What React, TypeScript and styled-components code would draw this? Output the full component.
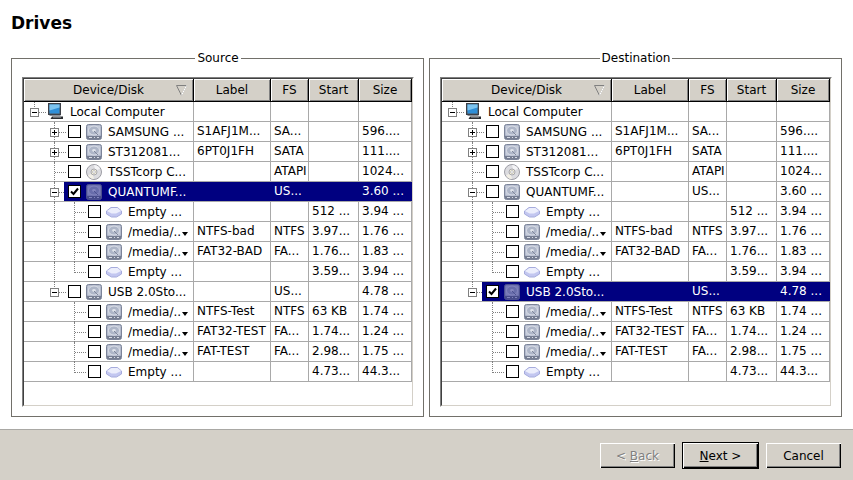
import styled, { createGlobalStyle } from "styled-components";

const GlobalStyle = createGlobalStyle`
  html, body {
    margin: 0;
    padding: 0;
    background: #fff;
  }
  body {
    font-family: "DejaVu Sans", sans-serif;
    font-size: 12px;
    color: #000;
  }
`;

type Kind = "computer" | "disk" | "cd" | "empty";

type DriveRow = {
  id: string;
  level: 0 | 1 | 2;
  kind: Kind;
  name: string;
  label?: string;
  fs?: string;
  start?: string;
  size?: string;
  expander?: "+" | "-";
  mounted?: boolean;
  // last sibling at this level, the guide stops half way
  last?: boolean;
  // the level 1 guide still runs through this row
  parentContinues?: boolean;
};

const rows: DriveRow[] = [
  { id: "root", level: 0, kind: "computer", name: "Local Computer", expander: "-" },
  { id: "samsung", level: 1, kind: "disk", name: "SAMSUNG ...", label: "S1AFJ1M...", fs: "SA...", size: "596....", expander: "+" },
  { id: "st", level: 1, kind: "disk", name: "ST312081...", label: "6PT0J1FH", fs: "SATA", size: "111....", expander: "+" },
  { id: "tsst", level: 1, kind: "cd", name: "TSSTcorp C...", fs: "ATAPI", size: "1024..." },
  { id: "quantum", level: 1, kind: "disk", name: "QUANTUMF...", fs: "US...", size: "3.60 ...", expander: "-" },
  { id: "q1", level: 2, kind: "empty", name: "Empty ...", start: "512 ...", size: "3.94 ...", parentContinues: true },
  { id: "q2", level: 2, kind: "disk", name: "/media/..", mounted: true, label: "NTFS-bad", fs: "NTFS", start: "3.97...", size: "1.76 ...", parentContinues: true },
  { id: "q3", level: 2, kind: "disk", name: "/media/..", mounted: true, label: "FAT32-BAD", fs: "FA...", start: "1.76...", size: "1.83 ...", parentContinues: true },
  { id: "q4", level: 2, kind: "empty", name: "Empty ...", start: "3.59...", size: "3.94 ...", parentContinues: true, last: true },
  { id: "usb", level: 1, kind: "disk", name: "USB 2.0Sto...", fs: "US...", size: "4.78 ...", expander: "-", last: true },
  { id: "u1", level: 2, kind: "disk", name: "/media/..", mounted: true, label: "NTFS-Test", fs: "NTFS", start: "63 KB", size: "1.74 ..." },
  { id: "u2", level: 2, kind: "disk", name: "/media/..", mounted: true, label: "FAT32-TEST", fs: "FA...", start: "1.74...", size: "1.24 ..." },
  { id: "u3", level: 2, kind: "disk", name: "/media/..", mounted: true, label: "FAT-TEST", fs: "FA...", start: "2.98...", size: "1.75 ..." },
  { id: "u4", level: 2, kind: "empty", name: "Empty ...", start: "4.73...", size: "44.3...", last: true },
];

const COLUMNS = "170px 77px 38px 50px 53px";

const Page = styled.div`
  width: 853px;
  height: 480px;
  display: flex;
  flex-direction: column;
  overflow: hidden;
`;

const Main = styled.main`
  height: 430px;
  box-sizing: border-box;
  padding: 0 0 0 11px;
  border-bottom: 1px solid #a9a8a4;
  background: #fff;
`;

const Title = styled.h1`
  margin: 0;
  height: 51px;
  padding-top: 13px;
  box-sizing: border-box;
  font-size: 17px;
  line-height: 21px;
  font-weight: bold;
`;

const Panels = styled.div`
  display: flex;
  gap: 5px;
`;

const Group = styled.fieldset`
  box-sizing: border-box;
  width: 413px;
  height: 366px;
  margin: 0;
  padding: 12px 9px 9px 10px;
  min-width: 0;
  border: 1px solid #72706a;
`;

const GroupTitle = styled.legend`
  margin: 0 auto;
  padding: 0 2px;
  font-size: 12px;
  line-height: 14px;
`;

const TreeFrame = styled.div`
  box-sizing: border-box;
  width: 392px;
  height: 330px;
  border: 1px solid;
  border-color: #808080 #fff #fff #808080;
`;

const TreeInner = styled.div`
  box-sizing: border-box;
  height: 100%;
  border: 1px solid;
  border-color: #404040 #d4d0c8 #d4d0c8 #404040;
  background: #fff;
`;

const HeaderRow = styled.div`
  display: grid;
  grid-template-columns: ${COLUMNS};
  height: 23px;
`;

const HeaderCell = styled.div`
  position: relative;
  display: flex;
  align-items: center;
  justify-content: center;
  box-sizing: border-box;
  background: #d4d0c8;
  border-right: 1px solid #000;
  border-bottom: 1px solid #000;
  box-shadow: inset 1px 1px 0 #fff, inset -1px -1px 0 #808080;
`;

const SortMark = styled.svg`
  position: absolute;
  right: 6px;
  top: 6px;
`;

const Row = styled.div<{ $selected: boolean }>`
  display: grid;
  grid-template-columns: ${COLUMNS};
  height: 20px;
  color: ${(p) => (p.$selected ? "#fff" : "#000")};
`;

const Cell = styled.div<{ $selected: boolean }>`
  box-sizing: border-box;
  padding-left: 3px;
  line-height: 18px;
  white-space: nowrap;
  overflow: hidden;
  background: ${(p) => (p.$selected ? "#000080" : "transparent")};
  border-right: 1px solid ${(p) => (p.$selected ? "#000080" : "#a9a9a9")};
  box-shadow: 0 1px 0 #a9a9a9;
  height: 19px;
`;

const TreeCell = styled.div<{ $selected: boolean }>`
  display: flex;
  box-sizing: border-box;
  height: 19px;
  box-shadow: 0 1px 0 #a9a9a9;
  border-right: 1px solid ${(p) => (p.$selected ? "#000080" : "#a9a9a9")};
`;

const Guide = styled.div<{ $line: "none" | "full" | "half"; $branch: boolean }>`
  position: relative;
  flex: none;
  width: 20px;
  height: 20px;

  &::before {
    content: "";
    display: ${(p) => (p.$line === "none" ? "none" : "block")};
    position: absolute;
    left: 10px;
    top: 0;
    height: ${(p) => (p.$line === "full" ? "20px" : "11px")};
    border-left: 1px dotted #808080;
  }
  &::after {
    content: "";
    display: ${(p) => (p.$branch ? "block" : "none")};
    position: absolute;
    left: 11px;
    top: 10px;
    width: 11px;
    border-top: 1px dotted #808080;
  }
`;

const Expander = styled.span`
  position: absolute;
  z-index: 1;
  left: 6px;
  top: 6px;
  box-sizing: border-box;
  width: 9px;
  height: 9px;
  border: 1px solid #808080;
  background: #fff;

  &::before {
    content: "";
    position: absolute;
    left: 1px;
    top: 3px;
    width: 5px;
    height: 1px;
    background: #000;
  }
`;

const ExpanderPlus = styled(Expander)`
  &::after {
    content: "";
    position: absolute;
    left: 3px;
    top: 1px;
    width: 1px;
    height: 5px;
    background: #000;
  }
`;

const Item = styled.div<{ $selected: boolean; $root: boolean }>`
  position: relative;
  z-index: 1;
  flex: 1;
  min-width: 0;
  display: flex;
  align-items: center;
  height: 19px;
  padding-left: ${(p) => (p.$root ? "3px" : "4px")};
  background: ${(p) => (p.$selected ? "#000080" : "transparent")};
`;

const Check = styled.span`
  flex: none;
  box-sizing: border-box;
  width: 13px;
  height: 13px;
  margin-right: 5px;
  border: 1px solid #000;
  background: #fff;
`;

const ItemIcon = styled.svg<{ $selected: boolean }>`
  flex: none;
  display: block;
  opacity: ${(p) => (p.$selected ? 0.6 : 1)};
`;

const ItemName = styled.span`
  flex: none;
  margin-left: 6px;
  line-height: 18px;
  white-space: nowrap;
`;

const MountMark = styled.svg`
  flex: none;
  margin: 4px 0 0 1px;
`;

const Footer = styled.footer`
  flex: 1;
  box-sizing: border-box;
  display: flex;
  align-items: center;
  justify-content: flex-end;
  gap: 7px;
  padding: 1px 12px 0 0;
  background: #d4d0c8;
`;

const Button = styled.button<{ $default?: boolean }>`
  box-sizing: border-box;
  width: ${(p) => (p.$default ? "77px" : "75px")};
  height: ${(p) => (p.$default ? "27px" : "25px")};
  margin: 0;
  padding: 0;
  font-family: "DejaVu Sans", sans-serif;
  font-size: 12px;
  color: #000;
  background: #d4d0c8;
  border: ${(p) => (p.$default ? "1px solid #000" : "none")};
  border-radius: 0;
  box-shadow: inset 1px 1px 0 #fff, inset -1px -1px 0 #000, inset -2px -2px 0 #808080;

  &:disabled {
    color: #808080;
    text-shadow: 1px 1px 0 #fff;
  }
`;

const DiskIcon = ({ selected }: { selected: boolean }) => (
  <ItemIcon $selected={selected} width="16" height="16" viewBox="0 0 16 16">
    <rect x="0.5" y="0.5" width="15" height="15" rx="2" fill="#a2abc0" stroke="#7c8499" />
    <rect x="1.5" y="1.5" width="13" height="10" rx="1" fill="#c6ccda" />
    <ellipse cx="8" cy="6.5" rx="5.5" ry="4.5" fill="#aeb6c8" stroke="#e2e5ec" strokeWidth="0.8" />
    <ellipse cx="8" cy="6.5" rx="1.8" ry="1.4" fill="#dfe3ea" />
    <path d="M8 7l4 4" stroke="#7f879b" strokeWidth="1" />
    <rect x="1" y="12" width="14" height="3" fill="#767e92" />
    <path d="M3 13.5h3M8 13.5h1M11 13.5h2" stroke="#d8dce6" strokeWidth="1" />
  </ItemIcon>
);

const CdIcon = () => (
  <ItemIcon $selected={false} width="16" height="16" viewBox="0 0 16 16">
    <circle cx="8" cy="8" r="7.5" fill="#dcdce0" stroke="#9c9ca4" />
    <path d="M8 1a7 7 0 0 1 6 3.5L9.5 7z" fill="#f4f4f6" />
    <path d="M8 15a7 7 0 0 1-6-3.5L6.5 9z" fill="#f2efe6" />
    <circle cx="8" cy="8" r="3" fill="#f6f2d8" stroke="#a8a8ae" />
    <circle cx="8" cy="8" r="1.4" fill="#fff" stroke="#9c9ca4" strokeWidth="0.6" />
  </ItemIcon>
);

const EmptyIcon = () => (
  <ItemIcon $selected={false} width="16" height="16" viewBox="0 0 16 16">
    <path d="M0.5 7L5 3.5h6.5L15.5 7v3l-5 3h-5l-5-3z" fill="#c3c7f0" stroke="#a6abdc" />
    <path d="M1 7l4.5-3h6L15 7l-5 2.6H5.6z" fill="#eceefc" />
  </ItemIcon>
);

const ComputerIcon = () => (
  <ItemIcon $selected={false} width="17" height="17" viewBox="0 0 17 17">
    <rect x="1.5" y="0.5" width="12" height="11" fill="#50565e" stroke="#3c4048" />
    <rect x="2.5" y="1.5" width="10" height="9" fill="#2f8fd8" />
    <path d="M2.5 1.5h10v3l-10 3z" fill="#7cc4f0" />
    <path d="M2 12h11l1 1H3z" fill="#8a9098" />
    <path d="M5 13.5h11v2.5H3.5z" fill="#2a2c30" />
    <path d="M6 14.5h8" stroke="#6a6e74" strokeWidth="1" />
  </ItemIcon>
);

const CheckedBox = styled(Check)`
  display: flex;
  align-items: center;
  justify-content: center;
`;

const RowIcon = ({ kind, selected }: { kind: Kind; selected: boolean }) => {
  if (kind === "computer") return <ComputerIcon />;
  if (kind === "cd") return <CdIcon />;
  if (kind === "empty") return <EmptyIcon />;
  return <DiskIcon selected={selected} />;
};

const DriveTree = ({ selectedId }: { selectedId: string }) => (
  <TreeFrame>
    <TreeInner>
      <HeaderRow>
        <HeaderCell>
          Device/Disk
          <SortMark width="11" height="11" viewBox="0 0 11 11">
            <path d="M0.5 0.5H10.5L5.5 10.5z" fill="none" stroke="#808080" />
            <path d="M10.5 0.5L5.5 10.5" stroke="#fff" />
          </SortMark>
        </HeaderCell>
        <HeaderCell>Label</HeaderCell>
        <HeaderCell>FS</HeaderCell>
        <HeaderCell>Start</HeaderCell>
        <HeaderCell>Size</HeaderCell>
      </HeaderRow>
      {rows.map((row) => {
        const selected = row.id === selectedId;
        const expander =
          row.expander === "+" ? <ExpanderPlus /> : row.expander === "-" ? <Expander /> : null;
        const line = row.last ? "half" : "full";
        return (
          <Row key={row.id} $selected={selected}>
            <TreeCell $selected={selected}>
              {row.level === 0 ? (
                <Guide $line="half" $branch>
                  {expander}
                </Guide>
              ) : (
                <Guide $line="none" $branch={false} />
              )}
              {row.level === 1 && (
                <Guide $line={line} $branch>
                  {expander}
                </Guide>
              )}
              {row.level === 2 && (
                <>
                  <Guide $line={row.parentContinues ? "full" : "none"} $branch={false} />
                  <Guide $line={line} $branch />
                </>
              )}
              <Item $selected={selected} $root={row.level === 0}>
                {row.level > 0 &&
                  (selected ? (
                    <CheckedBox>
                      <svg width="11" height="11" viewBox="0 0 11 11">
                        <path d="M2 5.5l2.5 2.5L9 2.5" fill="none" stroke="#000" strokeWidth="2" />
                      </svg>
                    </CheckedBox>
                  ) : (
                    <Check />
                  ))}
                <RowIcon kind={row.kind} selected={selected} />
                <ItemName>{row.name}</ItemName>
                {row.mounted && (
                  <MountMark width="6" height="6" viewBox="0 0 6 6">
                    <path d="M0 1h6L3 5z" fill="#000" />
                  </MountMark>
                )}
              </Item>
            </TreeCell>
            <Cell $selected={selected}>{row.label}</Cell>
            <Cell $selected={selected}>{row.fs}</Cell>
            <Cell $selected={selected}>{row.start}</Cell>
            <Cell $selected={selected}>{row.size}</Cell>
          </Row>
        );
      })}
    </TreeInner>
  </TreeFrame>
);

const App = () => (
  <Page>
    <GlobalStyle />
    <Main>
      <Title>Drives</Title>
      <Panels>
        <Group>
          <GroupTitle>Source</GroupTitle>
          <DriveTree selectedId="quantum" />
        </Group>
        <Group>
          <GroupTitle>Destination</GroupTitle>
          <DriveTree selectedId="usb" />
        </Group>
      </Panels>
    </Main>
    <Footer>
      <Button disabled>
        &lt; <u>B</u>ack
      </Button>
      <Button $default>
        <u>N</u>ext &gt;
      </Button>
      <Button>Cancel</Button>
    </Footer>
  </Page>
);

export default App;
